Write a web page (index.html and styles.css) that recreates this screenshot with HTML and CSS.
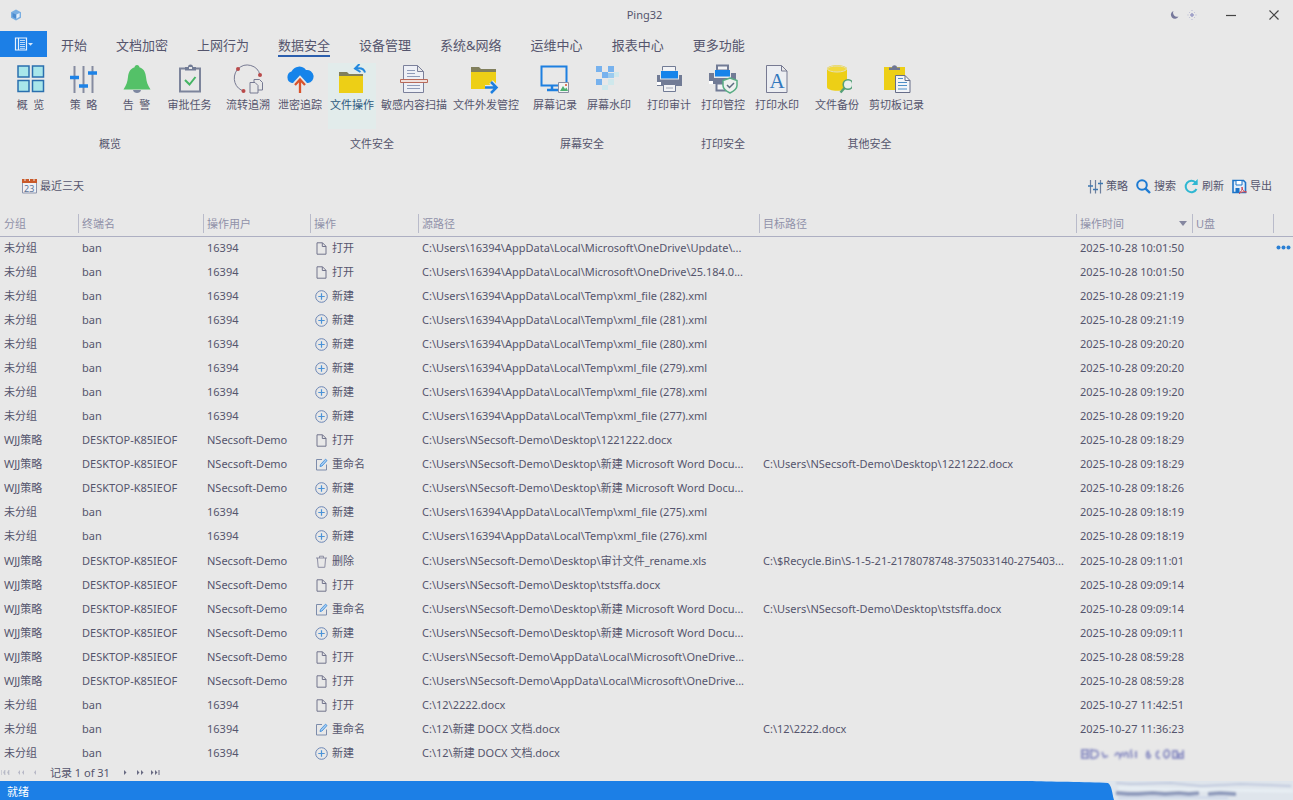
FILE: index.html
```
<!DOCTYPE html>
<html lang="zh-CN">
<head>
<meta charset="utf-8">
<title>Ping32</title>
<link rel="stylesheet" href="styles.css">
</head>
<body>
<svg class="defs" aria-hidden="true">
  <symbol id="file" viewBox="0 0 13 13"><path d="M2 .8h5.5L11 4.3v7.9H2zM7.3.8v3.7H11" fill="none" stroke="#72748c"/></symbol>
  <symbol id="plus" viewBox="0 0 13 13"><circle cx="6.5" cy="6.5" r="5.8" fill="none" stroke="#6b86b5"/><path d="M6.500 3.300v6.400M3.300 6.500h6.400" stroke="#4b93d8" stroke-width="1.200"/></symbol>
  <symbol id="edit" viewBox="0 0 13 13"><path d="M7 1.500H1.500v10.500h10V6.500" fill="none" stroke="#7d8cab"/><path d="M5 8.500l.5-2L10.500 1.200l1.500 1.300-5 5.500z" fill="#a9cdf0" stroke="#3f8fdc" stroke-width=".9"/></symbol>
  <symbol id="trash" viewBox="0 0 13 13"><path d="M1 3h11M4.500 3V1.200h4V3M2.400 3l.8 9.300h6.600L10.600 3" fill="none" stroke="#8d8ea3"/></symbol>
  <symbol id="sliders" viewBox="0 0 30 30"><path d="M5.500 2v27M14.500 2v27M23.500 2v27" stroke="#858ba0" stroke-width="2"/><path d="M1 13.500h9M10 22h9M19 9h9" stroke="#1d82e6" stroke-width="3.500"/></symbol>
</svg>
<header class="titlebar">
  <svg class="logo" viewBox="0 0 12 12"><path d="M6 .5l5 2.700v5.600l-5 2.700-5-2.700V3.200z" fill="#79aee2"/><path d="M2.500 4L6 5.600v4.200L2.500 8z" fill="#4d8ccf"/><path d="M6.500 5.600L9.600 4v3.800L6.500 9.700z" fill="#e3eefa"/></svg>
  <h1>Ping32</h1>
  <div class="winbtns">
    <button class="theme" aria-label="主题"><svg viewBox="0 0 28 10"><path d="M3.500 1a4 4 0 1 0 5 5.500A4 4 0 0 1 3.500 1z" fill="#77799c"/><path d="M22 3v4M20 5h4" stroke="#9c9dc6" stroke-width="1.500"/><path d="M22 0v1M22 9v1M17.500 5h1M25.500 5h1M19 2l.7.7M25 2l-.7.7M19 8l.7-.7M25 8l-.7-.7" stroke="#b5b6d2"/></svg></button>
    <button aria-label="最小化"><svg viewBox="0 0 10 10"><path d="M0 5.500h10" stroke="#444" stroke-width="1.200"/></svg></button>
    <button aria-label="关闭"><svg viewBox="0 0 10 10"><path d="M.5.5l9 9M9.500.5l-9 9" stroke="#444" stroke-width="1.200"/></svg></button>
  </div>
</header>
<nav class="tabs">
  <button class="app" aria-label="菜单"><svg viewBox="0 0 20 14"><path d="M1.500 1h11v12h-11zM4.500 1v12" fill="none" stroke="#e8f2fd" stroke-width="1.200"/><path d="M6 3.500h5M6 5.500h5M6 7.500h5M6 9.500h5M6 11.300h5" stroke="#cfe4fa" stroke-width=".9"/><path d="M14 6h5l-2.500 2.700z" fill="#d6e8fb"/></svg></button>
  <a href="#">开始</a><a href="#">文档加密</a><a href="#">上网行为</a><a href="#" class="on">数据安全</a><a href="#">设备管理</a><a href="#">系统&amp;网络</a><a href="#">运维中心</a><a href="#">报表中心</a><a href="#">更多功能</a>
</nav>
<main>
<div class="ribbon">
  <section class="group first">
    <div class="items">
      <button><svg viewBox="0 0 30 30"><g fill="#a8e6ea" stroke="#2a6fae" stroke-width="1.500"><path d="M2 2h11v11H2zM16.500 2h11v11h-11zM2 16.500h11v11H2zM16.500 16.500h11v11h-11z"/></g></svg>概&nbsp;&nbsp;览</button>
      <button><svg><use href="#sliders"/></svg>策&nbsp;&nbsp;略</button>
      <button><svg viewBox="0 0 30 30"><path d="M11 26h8c-.5 4-7.500 4-8 0z" fill="#7d87a0"/><path d="M15 1c1.600 0 2.200 1 2.400 2.200C22.500 5 23.500 9 24 13c.6 5 1.500 8 4.500 12.500h-27C4.500 21 5.400 18 6 13c.5-4 1.500-8 6.600-9.800C12.800 2 13.400 1 15 1z" fill="#54c168"/></svg>告&nbsp;&nbsp;警</button>
      <button><svg viewBox="0 0 30 30"><path d="M5 4.500h20v23H5z" fill="none" stroke="#7c849b" stroke-width="2"/><path d="M10 3h3a2.500 2.500 0 0 1 5 0h3v3.500H10z" fill="#717b95"/><path d="M14 3h3v2h-3z" fill="#e8e8e8"/><path d="M10 16l4.500 4.500 6-7.500" fill="none" stroke="#45b564" stroke-width="2"/></svg>审批任务</button>
    </div>
    <h2>概览</h2>
  </section>
  <section class="group">
    <div class="items">
      <button><svg viewBox="0 0 30 30"><path d="M11 27A12 13 0 0 1 4 6M5 5a13 13 0 0 1 22 6" fill="none" stroke="#777a92"/><circle cx="5" cy="5" r="2" fill="#b94a4a"/><circle cx="27" cy="11" r="2" fill="#b94a4a"/><circle cx="10.500" cy="27" r="2" fill="#b94a4a"/><g fill="#e8e8e8" stroke="#777a92"><path d="M21 15.500h5.500l3 3V26H21z"/><path d="M17 18.500h5l3 3v7.500h-8z"/></g></svg>流转追溯</button>
      <button><svg viewBox="0 0 30 30"><path d="M7 19a6 6 0 0 1-.5-11.500A8.500 8.500 0 0 1 21 6a6.500 6.500 0 1 1 2 13z" fill="#1684ea"/><path d="M15 29V16M10 20.500l5-5.500 5 5.500" fill="none" stroke="#e8e8e8" stroke-width="5"/><path d="M15 29V16M10 21l5-5.500 5 5.500" fill="none" stroke="#d9532c" stroke-width="2.300"/></svg>泄密追踪</button>
      <button class="active"><svg viewBox="0 0 30 30"><path d="M2 10V8h8l2 2h14v2H2z" fill="#817f5c"/><path d="M2 12h24v17H2z" fill="#edcf16"/><path d="M28 8.500c-.8-3.500-4-5-9-4M22.500 0L18 4.500l5.500 3.500" fill="none" stroke="#2489df" stroke-width="2"/></svg>文件操作</button>
      <button><svg viewBox="0 0 30 30"><path d="M4.500 1.500h14l6 6v21h-20zM18.500 1.500v6h6" fill="#eef0f6" stroke="#7b809b"/><path d="M8 6.500h8M8 9.500h8M8 12.500h13M8 21.500h13M8 24.500h13" stroke="#8f9bb8"/><path d="M1.500 15.500h27v3h-27z" fill="#f0dfdb" stroke="#b86a5a"/></svg>敏感内容扫描</button>
      <button><svg viewBox="0 0 30 30"><path d="M0 5V3h8l2 2h15v4H0z" fill="#817f5c"/><path d="M0 8h25v17H0z" fill="#edcf16"/><path d="M14 23.500h11M20 18l5.500 5.500L20 29" fill="none" stroke="#e8e8e8" stroke-width="5"/><path d="M14 23.500h11M20 18l5.500 5.500L20 29" fill="none" stroke="#1d7fe0" stroke-width="2.500"/></svg>文件外发管控</button>
    </div>
    <h2>文件安全</h2>
  </section>
  <section class="group wide">
    <div class="items">
      <button><svg viewBox="0 0 30 30"><path d="M1.500 2.500h25v19h-25z" fill="none" stroke="#1d7fe0" stroke-width="2"/><path d="M12 22v3M7 26h11" stroke="#1d7fe0" stroke-width="2.500"/><path d="M18.500 18.500h10v10h-10z" fill="#f2f4f4" stroke="#8a8fa2"/><path d="M20 27l3-5 2 3 1.500-1.500L28 27z" fill="#4eb070"/><circle cx="26" cy="21" r="1" fill="#d9532c"/></svg>屏幕记录</button>
      <button><svg viewBox="0 0 30 30"><g fill="#77b2ee"><path d="M2 2h6v6H2zM14 2h6v6h-6zM8 8h6v6H8zM2 15h6v6H2z"/></g><path d="M14 9h6v5h-6z" fill="#9acbef"/><path d="M20 8h5v5h-5zM14 15h6v6h-6zM8 21h6v5H8z" fill="#cfe8ec"/></svg>屏幕水印</button>
    </div>
    <h2>屏幕安全</h2>
  </section>
  <section class="group wide">
    <div class="items">
      <button><svg viewBox="0 0 30 30"><path d="M3 11h25v11H3z" fill="#717b95"/><path d="M8.500 2.500h13v5h-13z" fill="#f2f3f5" stroke="#717b95"/><path d="M6 6.500h19v9H6z" fill="#e8e8e8"/><path d="M7 7h17v7.500H7z" fill="#1684ea"/><path d="M3 18h4v3H3z" fill="#fff"/><path d="M9.500 20.500h12v7h-12z" fill="#f2f3f5" stroke="#717b95"/><path d="M12 24h7" stroke="#a4a9b8"/></svg>打印审计</button>
      <button><svg viewBox="0 0 30 30"><path d="M1 9h27v11H1z" fill="#717b95"/><path d="M9 1.500h11v5H9z" fill="#f2f3f5" stroke="#717b95" stroke-width="2"/><path d="M6 6h17v8H6z" fill="#e8e8e8"/><path d="M7 6h15v6.500H7z" fill="#1684ea"/><path d="M1 17h4v3H1z" fill="#fff"/><path d="M8.500 19.500h9v7h-9z" fill="#f2f3f5" stroke="#717b95" stroke-width="2"/><path d="M22 14l7 2.500v5c0 3-3 5.500-7 7.500-4-2-7-4.500-7-7.500v-5z" fill="#eef1ef" stroke="#58ad84" stroke-width="1.500"/><path d="M19 21l2.500 2.500L26 19" fill="none" stroke="#5d6b80" stroke-width="1.500"/></svg>打印管控</button>
      <button><svg viewBox="0 0 30 30"><path d="M4.500 1.500h15l5.500 5.500v21.500H4.500zM19.500 1.500V7H25" fill="#eceef2" stroke="#777a92"/><text x="15" y="24" class="letter">A</text></svg>打印水印</button>
    </div>
    <h2>打印安全</h2>
  </section>
  <section class="group wide">
    <div class="items">
      <button><svg viewBox="0 0 30 30"><path d="M5 5c0-5 20-5 20 0v18c0 5-20 5-20 0z" fill="#edcf16"/><ellipse cx="15" cy="5" rx="9.500" ry="3" fill="#f2d93e" stroke="#e4e0b8"/><circle cx="26" cy="20.500" r="4.800" fill="#e9efec" stroke="#55a078" stroke-width="1.600"/><path d="M22.500 24L18.500 28.500" stroke="#55a078" stroke-width="2.500"/></svg>文件备份</button>
      <button><svg viewBox="0 0 30 30"><path d="M2 3h21v23H2z" fill="#edcf16"/><path d="M7 3.500h3c0-3 5-3 5 0h3V6H7z" fill="#6e7692"/><path d="M13.500 11.500H23l5 5v12H13.500z" fill="#f2f4f8" stroke="#666d88"/><path d="M23 11.500v5h5" fill="none" stroke="#666d88"/><path d="M16 14.500h5M16 18.500h9M16 21.500h9M16 25h9" stroke="#4e8fc8"/></svg>剪切板记录</button>
    </div>
    <h2>其他安全</h2>
  </section>
</div>
<div class="toolbar">
  <button><svg viewBox="0 0 15 15"><path d="M.5 1h14v13H.5z" fill="#f0f0f4" stroke="#8d95ad"/><path d="M0 0h15v4H0z" fill="#c95a2b"/><path d="M3 0v2M7.500 0v2M12 0v2" stroke="#e8e8e8"/><text x="2" y="13" class="day">23</text></svg>最近三天</button>
  <div class="actions">
    <button><svg viewBox="0 0 15 15"><path d="M2.500 1v13.500M7.500 1v13.500M12.500 1v13.500" stroke="#6d7f9d" stroke-width="1.200"/><path d="M0 7h5M5 10.500h5M10 4.500h5" stroke="#3d77b0" stroke-width="1.600"/></svg>策略</button>
    <button><svg viewBox="0 0 15 15"><circle cx="6" cy="6" r="4.800" fill="none" stroke="#1d7bd3" stroke-width="2"/><path d="M9.300 9.300l4.700 4.700" stroke="#1d7bd3" stroke-width="2.400"/></svg>搜索</button>
    <button><svg viewBox="0 0 15 15"><path d="M12.500 10A5.700 5.700 0 1 1 11.500 3.500" fill="none" stroke="#2fb7d2" stroke-width="2"/><path d="M13.700 0v6H7.800z" fill="#2fb7d2"/></svg>刷新</button>
    <button><svg viewBox="0 0 15 15"><path d="M1 1.500h10.500l2 2v10H1z" fill="#e3eefa" stroke="#1d74c8" stroke-width="1.600"/><path d="M4 1.500h6V6H4z" fill="#fff" stroke="#1d74c8"/><path d="M3.500 9h4v4h-4z" fill="#1d74c8"/><path d="M7 14.500c2.500-2 3.500-4 3-6.500 0 3 1.500 4.500 4.500 5-3-.5-5.500 0-7.500 1.500z" fill="#fff" stroke="#d0444f"/></svg>导出</button>
  </div>
</div>
<table>
  <colgroup><col class="c-group"><col class="c-host"><col class="c-user"><col class="c-op"><col class="c-src"><col><col class="c-time"><col class="c-usb"><col class="c-more"></colgroup>
  <thead><tr><th>分组</th><th>终端名</th><th>操作用户</th><th>操作</th><th>源路径</th><th>目标路径</th><th><span class="sorted">操作时间<svg viewBox="0 0 10 6"><path d="M1 0h8L5 5z" fill="#8587a0"/></svg></span></th><th>U盘</th><th></th></tr></thead>
  <tbody>
    <tr><td>未分组</td><td>ban</td><td>16394</td><td><svg><use href="#file"/></svg>打开</td><td>C:\Users\16394\AppData\Local\Microsoft\OneDrive\Update\...</td><td></td><td>2025-10-28 10:01:50</td><td></td><td><button class="more" aria-label="更多"><svg viewBox="0 0 15 5"><g fill="#2a7fd4"><circle cx="2.500" cy="2.500" r="2"/><circle cx="7.500" cy="2.500" r="2"/><circle cx="12.500" cy="2.500" r="2"/></g></svg></button></td></tr>
    <tr><td>未分组</td><td>ban</td><td>16394</td><td><svg><use href="#file"/></svg>打开</td><td>C:\Users\16394\AppData\Local\Microsoft\OneDrive\25.184.0...</td><td></td><td>2025-10-28 10:01:50</td><td></td><td></td></tr>
    <tr><td>未分组</td><td>ban</td><td>16394</td><td><svg><use href="#plus"/></svg>新建</td><td>C:\Users\16394\AppData\Local\Temp\xml_file (282).xml</td><td></td><td>2025-10-28 09:21:19</td><td></td><td></td></tr>
    <tr><td>未分组</td><td>ban</td><td>16394</td><td><svg><use href="#plus"/></svg>新建</td><td>C:\Users\16394\AppData\Local\Temp\xml_file (281).xml</td><td></td><td>2025-10-28 09:21:19</td><td></td><td></td></tr>
    <tr><td>未分组</td><td>ban</td><td>16394</td><td><svg><use href="#plus"/></svg>新建</td><td>C:\Users\16394\AppData\Local\Temp\xml_file (280).xml</td><td></td><td>2025-10-28 09:20:20</td><td></td><td></td></tr>
    <tr><td>未分组</td><td>ban</td><td>16394</td><td><svg><use href="#plus"/></svg>新建</td><td>C:\Users\16394\AppData\Local\Temp\xml_file (279).xml</td><td></td><td>2025-10-28 09:20:20</td><td></td><td></td></tr>
    <tr><td>未分组</td><td>ban</td><td>16394</td><td><svg><use href="#plus"/></svg>新建</td><td>C:\Users\16394\AppData\Local\Temp\xml_file (278).xml</td><td></td><td>2025-10-28 09:19:20</td><td></td><td></td></tr>
    <tr><td>未分组</td><td>ban</td><td>16394</td><td><svg><use href="#plus"/></svg>新建</td><td>C:\Users\16394\AppData\Local\Temp\xml_file (277).xml</td><td></td><td>2025-10-28 09:19:20</td><td></td><td></td></tr>
    <tr><td>WJJ策略</td><td>DESKTOP-K85IEOF</td><td>NSecsoft-Demo</td><td><svg><use href="#file"/></svg>打开</td><td>C:\Users\NSecsoft-Demo\Desktop\1221222.docx</td><td></td><td>2025-10-28 09:18:29</td><td></td><td></td></tr>
    <tr><td>WJJ策略</td><td>DESKTOP-K85IEOF</td><td>NSecsoft-Demo</td><td><svg><use href="#edit"/></svg>重命名</td><td>C:\Users\NSecsoft-Demo\Desktop\新建 Microsoft Word Docu...</td><td>C:\Users\NSecsoft-Demo\Desktop\1221222.docx</td><td>2025-10-28 09:18:29</td><td></td><td></td></tr>
    <tr><td>WJJ策略</td><td>DESKTOP-K85IEOF</td><td>NSecsoft-Demo</td><td><svg><use href="#plus"/></svg>新建</td><td>C:\Users\NSecsoft-Demo\Desktop\新建 Microsoft Word Docu...</td><td></td><td>2025-10-28 09:18:26</td><td></td><td></td></tr>
    <tr><td>未分组</td><td>ban</td><td>16394</td><td><svg><use href="#plus"/></svg>新建</td><td>C:\Users\16394\AppData\Local\Temp\xml_file (275).xml</td><td></td><td>2025-10-28 09:18:19</td><td></td><td></td></tr>
    <tr><td>未分组</td><td>ban</td><td>16394</td><td><svg><use href="#plus"/></svg>新建</td><td>C:\Users\16394\AppData\Local\Temp\xml_file (276).xml</td><td></td><td>2025-10-28 09:18:19</td><td></td><td></td></tr>
    <tr><td>WJJ策略</td><td>DESKTOP-K85IEOF</td><td>NSecsoft-Demo</td><td><svg><use href="#trash"/></svg>删除</td><td>C:\Users\NSecsoft-Demo\Desktop\审计文件_rename.xls</td><td>C:\$Recycle.Bin\S-1-5-21-2178078748-375033140-275403...</td><td>2025-10-28 09:11:01</td><td></td><td></td></tr>
    <tr><td>WJJ策略</td><td>DESKTOP-K85IEOF</td><td>NSecsoft-Demo</td><td><svg><use href="#file"/></svg>打开</td><td>C:\Users\NSecsoft-Demo\Desktop\tstsffa.docx</td><td></td><td>2025-10-28 09:09:14</td><td></td><td></td></tr>
    <tr><td>WJJ策略</td><td>DESKTOP-K85IEOF</td><td>NSecsoft-Demo</td><td><svg><use href="#edit"/></svg>重命名</td><td>C:\Users\NSecsoft-Demo\Desktop\新建 Microsoft Word Docu...</td><td>C:\Users\NSecsoft-Demo\Desktop\tstsffa.docx</td><td>2025-10-28 09:09:14</td><td></td><td></td></tr>
    <tr><td>WJJ策略</td><td>DESKTOP-K85IEOF</td><td>NSecsoft-Demo</td><td><svg><use href="#plus"/></svg>新建</td><td>C:\Users\NSecsoft-Demo\Desktop\新建 Microsoft Word Docu...</td><td></td><td>2025-10-28 09:09:11</td><td></td><td></td></tr>
    <tr><td>WJJ策略</td><td>DESKTOP-K85IEOF</td><td>NSecsoft-Demo</td><td><svg><use href="#file"/></svg>打开</td><td>C:\Users\NSecsoft-Demo\AppData\Local\Microsoft\OneDrive...</td><td></td><td>2025-10-28 08:59:28</td><td></td><td></td></tr>
    <tr><td>WJJ策略</td><td>DESKTOP-K85IEOF</td><td>NSecsoft-Demo</td><td><svg><use href="#file"/></svg>打开</td><td>C:\Users\NSecsoft-Demo\AppData\Local\Microsoft\OneDrive...</td><td></td><td>2025-10-28 08:59:28</td><td></td><td></td></tr>
    <tr><td>未分组</td><td>ban</td><td>16394</td><td><svg><use href="#file"/></svg>打开</td><td>C:\12\2222.docx</td><td></td><td>2025-10-27 11:42:51</td><td></td><td></td></tr>
    <tr><td>未分组</td><td>ban</td><td>16394</td><td><svg><use href="#edit"/></svg>重命名</td><td>C:\12\新建 DOCX 文档.docx</td><td>C:\12\2222.docx</td><td>2025-10-27 11:36:23</td><td></td><td></td></tr>
    <tr><td>未分组</td><td>ban</td><td>16394</td><td><svg><use href="#plus"/></svg>新建</td><td>C:\12\新建 DOCX 文档.docx</td><td></td><td><svg class="smudge" viewBox="0 0 106 12"><path d="M2 2v8h6V2zM2 6h6M11 2v8c6 1 9-3 6-7zM22 4l2 5 4-1M35 8c2-5 5-3 5 1l3-5M44 9c1-7 5-5 4 1M52 2c-4 2 2 4-1 8M56 3v7M69 3c-4 2 4 4 0 7-3 0-3-6 0-7M79 3c-4 2-3 8 1 7M86 2c5 0 4 7 0 8-3-2-3-6 0-8M93 3v7h4V3zM103 2v8h-4V6h4" fill="none" stroke="#8f92c4" stroke-width="2"/></svg></td><td></td><td></td></tr>
  </tbody>
</table>
</main>
<div class="pager">
  <button disabled aria-label="首页"><svg viewBox="0 0 10 5"><path d="M.5 0v5M4 0v5L2.500 2.500zM8 0v5L6.500 2.500z" fill="#b7b8c6" stroke="#b7b8c6" stroke-width=".6"/></svg></button>
  <button disabled aria-label="上翻"><svg viewBox="0 0 10 5"><path d="M4 0v5L2 2.500zM8 0v5L6 2.500z" fill="#b7b8c6"/></svg></button>
  <button disabled aria-label="上一条"><svg viewBox="0 0 10 5"><path d="M5 0v5L3 2.500z" fill="#b7b8c6"/></svg></button>
  <span>记录 1 of 31</span>
  <button aria-label="下一条"><svg viewBox="0 0 10 5"><path d="M4 0v5l2.500-2.500z" fill="#686a82"/></svg></button>
  <button aria-label="下翻"><svg viewBox="0 0 10 5"><path d="M2 0v5l2.500-2.500zM6 0v5l2.500-2.500z" fill="#686a82"/></svg></button>
  <button aria-label="末页"><svg viewBox="0 0 10 5"><path d="M1 0v5l2.500-2.500zM5 0v5l2.500-2.500zM8.500 0h1v5h-1z" fill="#686a82"/></svg></button>
</div>
<footer class="status">
  <span>就绪</span>
  <svg viewBox="0 0 265 19"><defs><filter id="soft" x="-5%" y="-50%" width="110%" height="200%"><feGaussianBlur stdDeviation="1"/></filter></defs><path d="M0 0h265v19H86C84 12 84 5 80 2 60 1 20 1 0 0z" fill="#dfe5ec"/><g filter="url(#soft)" fill="none"><path d="M88 2l15 1 40-1 30 3 40-2 50 2" stroke="#b9c3da" stroke-width="1.500"/><path d="M90 7l90 2 85 1" stroke="#e8eff4" stroke-width="3"/><path d="M88 12l12 1h10l15-1 12 1 14-1 10 1 10-1M180 13l12-1 16 1" stroke="#8e9abb" stroke-width="4"/><path d="M90 17l60-1 50 1" stroke="#ccd6e8" stroke-width="2"/></g></svg>
</footer>
</body>
</html>
```
FILE: styles.css
```
* { box-sizing: border-box; }
body {
  margin: 0;
  min-height: 100vh;
  display: flex;
  flex-direction: column;
  background: #e8e8e8;
  color: #55556d;
  font: 11px/16px "Noto Sans", "Noto Sans CJK SC", sans-serif;
}
button {
  padding: 0;
  border: 0;
  background: none;
  color: inherit;
  font: inherit;
  white-space: nowrap;
}
h1, h2 { margin: 0; font-size: 11px; font-weight: 400; }
svg { display: block; flex: none; }
.defs { width: 0; height: 0; position: absolute; }

.titlebar {
  display: grid;
  grid-template-columns: 1fr auto 1fr;
  align-items: center;
  height: 31px;
  padding: 0 14px 1px 10px;
}
.logo { width: 12px; height: 12px; }
.winbtns { display: flex; justify-content: flex-end; align-items: center; gap: 33px; }
.winbtns svg { width: 10px; height: 10px; }
.winbtns .theme { margin-right: -5px; }
.winbtns .theme svg { width: 28px; }

.tabs { display: flex; align-items: stretch; gap: 29px; height: 26px; }
.tabs a {
  height: 26px;
  color: inherit;
  font-size: 13px;
  line-height: 28px;
  text-decoration: none;
  border-bottom: 2px solid transparent;
  white-space: nowrap;
}
.tabs .on { border-color: #2c5fae; }
.tabs .app {
  display: flex;
  align-items: center;
  justify-content: center;
  width: 47px;
  margin-right: -15px;
  background: #1c7fe6;
}
.app svg { width: 20px; height: 14px; }

main { flex: 1; display: flex; flex-direction: column; }
.ribbon { display: flex; gap: 6px; padding: 6px 4px 0; height: 112px; }
.group { display: flex; flex-direction: column; align-items: center; }
.group h2 { margin-top: 7px; }
.items { display: flex; }
.items button {
  display: flex;
  flex-direction: column;
  align-items: center;
  gap: 3px;
  min-width: 52px;
  height: 66px;
  padding: 1px 3px 0;
}
.first button { min-width: 53px; }
.items .active {
  padding: 1px 1px 0;
  border: solid transparent;
  border-width: 0 2px;
  background: #e2eceb padding-box;
  color: #2f5a80;
}
.wide button { padding: 1px 5px 0; }
.items svg { width: 30px; height: 30px; }
.letter {
  font: 21px "Liberation Serif", serif;
  fill: #3278bd;
  text-anchor: middle;
}

.toolbar {
  display: flex;
  align-items: center;
  justify-content: space-between;
  height: 34px;
  padding: 0 21px 0 22px;
}
.toolbar button { display: flex; align-items: center; gap: 3px; }
.toolbar svg { width: 15px; height: 15px; }
.actions { display: flex; gap: 8px; }
.day { font-size: 9px; fill: #5a7296; }

table {
  flex: 1;
  width: 100%;
  margin-top: 8px;
  border-collapse: collapse;
  table-layout: fixed;
}
.c-group { width: 78px; }
.c-host { width: 125px; }
.c-user { width: 107px; }
.c-op { width: 108px; }
.c-src { width: 341px; }
.c-time { width: 116px; }
.c-usb { width: 81px; }
.c-more { width: 20px; }
th {
  height: 25px;
  padding: 1px 4px 0;
  border-bottom: 1px solid #adafc2;
  background: linear-gradient(#b9bbca, #b9bbca) left center / 1px 19px no-repeat;
  color: #9091a8;
  font-weight: 400;
  text-align: left;
}
th:first-child { background: none; }
.sorted { display: flex; align-items: center; justify-content: space-between; }
.sorted svg { width: 10px; height: 6px; }
td {
  height: 24px;
  padding: 0 4px 1px;
  overflow: hidden;
  white-space: nowrap;
}
td svg {
  display: inline-block;
  width: 13px;
  height: 13px;
  margin: 0 4px 0 1px;
  vertical-align: -3px;
}
td .smudge { width: 106px; height: 12px; margin: 0; filter: blur(1px); }
td:last-child { padding: 0 0 1px; }
.more { display: block; margin-left: 3px; }
.more svg { display: block; width: 15px; height: 5px; margin: 0; }

.pager { display: flex; align-items: center; height: 15px; padding: 0 0 2px 1px; }
.pager button { width: 15px; }
.pager svg { width: 10px; height: 5px; }
.pager span { margin: 0 10px 0 4px; }
.status {
  display: flex;
  justify-content: space-between;
  height: 19px;
  padding-left: 7px;
  background: #1c7fe6;
  color: #fff;
  line-height: 22px;
}
.status svg { width: 265px; height: 19px; }
```
